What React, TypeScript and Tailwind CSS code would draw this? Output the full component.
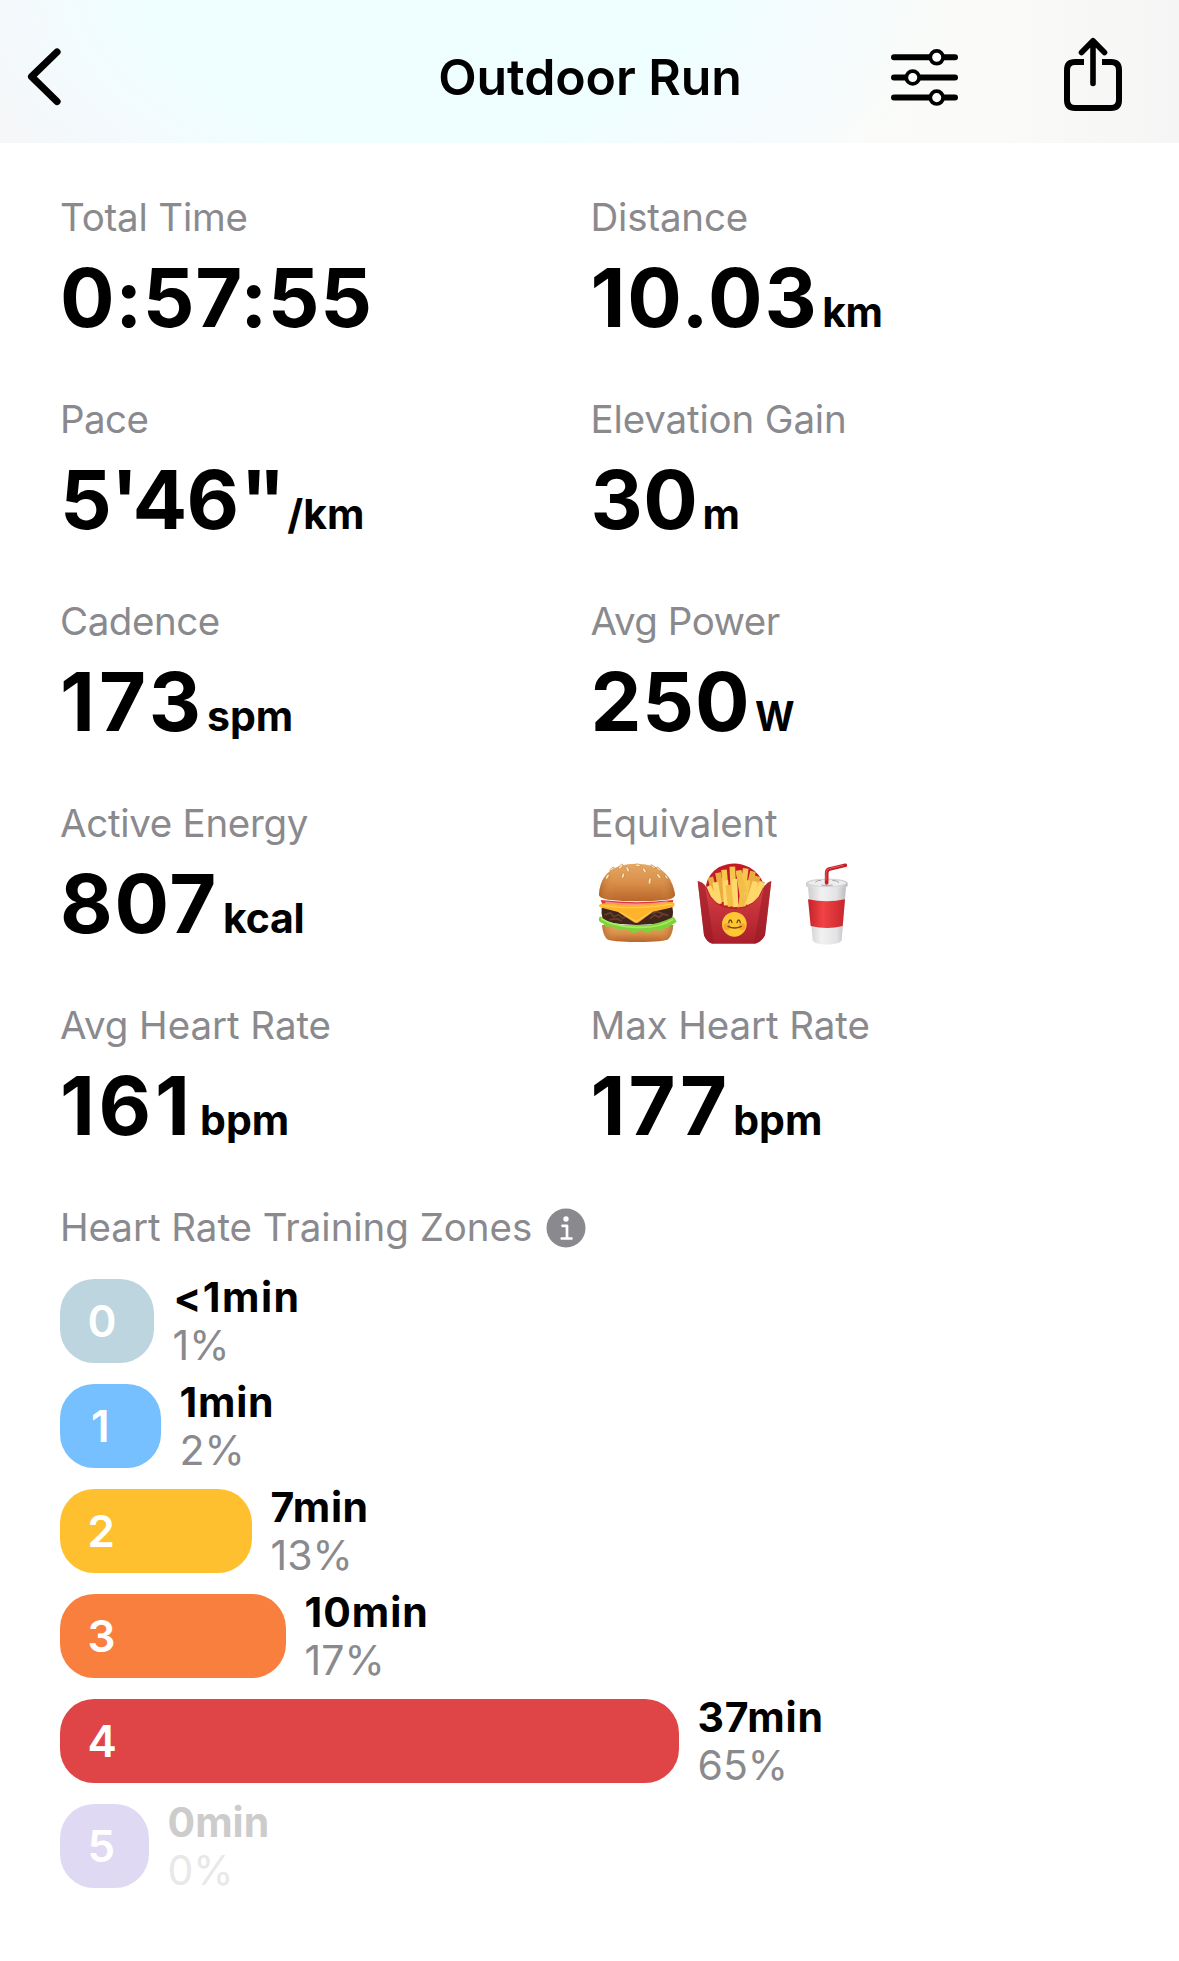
import React from 'react';

interface Metric {
  label: string;
  labelClass?: string;
  value?: React.ReactNode;
  valueClass?: string;
  unit?: string;
  unitClass?: string;
}

const pace = (
  <>
    5'46<span className="ml-[2px] tracking-[-9.5px]">''</span>
  </>
);

const metrics: Metric[] = [
  { label: 'Total Time', labelClass: 'tracking-[-0.2px]', value: '0:57:55', valueClass: 'tracking-[0.6px]' },
  { label: 'Distance', labelClass: 'tracking-[-0.2px]', value: '10.03', valueClass: 'tracking-[1.9px]', unit: 'km', unitClass: 'ml-[3.5px] tracking-[-0.5px]' },
  { label: 'Pace', labelClass: 'tracking-[-0.6px]', value: pace, valueClass: 'tracking-[-0.8px]', unit: '/km', unitClass: 'ml-[11px]' },
  { label: 'Elevation Gain', labelClass: 'tracking-[-0.15px]', value: '30', valueClass: 'tracking-[0.5px]', unit: 'm', unitClass: 'ml-[4px]' },
  { label: 'Cadence', labelClass: 'tracking-[-0.45px]', value: '173', valueClass: 'tracking-[4px]', unit: 'spm', unitClass: 'ml-[2px]' },
  { label: 'Avg Power', labelClass: 'tracking-[-0.5px]', value: '250', valueClass: 'tracking-[0.8px]', unit: 'W', unitClass: 'ml-[5px] inline-block origin-left scale-x-[0.93]' },
  { label: 'Active Energy', labelClass: 'tracking-[-0.3px]', value: '807', valueClass: 'tracking-[1.7px]', unit: 'kcal', unitClass: 'ml-[5px] tracking-[-0.2px]' },
  { label: 'Equivalent', labelClass: 'tracking-[-0.2px]' },
  { label: 'Avg Heart Rate', labelClass: 'tracking-[-0.05px]', value: '161', valueClass: 'tracking-[3.7px]', unit: 'bpm', unitClass: 'ml-[6.5px]' },
  { label: 'Max Heart Rate', labelClass: 'tracking-[-0.1px]', value: '177', valueClass: 'tracking-[3px]', unit: 'bpm', unitClass: 'ml-[3px]' },
];

const zones = [
  { id: 0, width: 94, color: 'bg-[#bcd5df]', time: '<1min', percent: '1%', timeClass: 'pl-px tracking-[1.5px]' },
  { id: 1, width: 101, color: 'bg-[#76c0ff]', time: '1min', percent: '2%', timeClass: 'tracking-[0.8px]' },
  { id: 2, width: 192, color: 'bg-[#ffc02f]', time: '7min', percent: '13%', timeClass: 'tracking-[0.6px]' },
  { id: 3, width: 226, color: 'bg-[#f97f3f]', time: '10min', percent: '17%', timeClass: 'tracking-[1px]' },
  { id: 4, width: 619, color: 'bg-[#df4547]', time: '37min', percent: '65%', timeClass: 'tracking-[0.8px]' },
  { id: 5, width: 89, color: 'bg-[#dfd9f3]', time: '0min', percent: '0%', timeClass: '' },
];

function BackIcon() {
  return (
    <svg width="36" height="60" viewBox="0 0 36 60" fill="none" stroke="black" strokeWidth="7.2" strokeLinecap="round" strokeLinejoin="round">
      <path d="M30 5 4.600 29.700 30 54.500" />
    </svg>
  );
}

function SlidersIcon() {
  return (
    <svg width="68" height="60" viewBox="0 0 68 60" fill="none" stroke="black" strokeLinecap="round">
      <g strokeWidth="6">
        <path d="M3 10.300H40M52 10.300H64" />
        <path d="M3 30.500H16M28 30.500H64" />
        <path d="M3 50.600H40M52 50.600H64" />
      </g>
      <g strokeWidth="3.700">
        <circle cx="45.700" cy="10.300" r="6.400" fill="#fbfcfb" />
        <circle cx="21.700" cy="30.500" r="6.400" fill="#fbfcfb" />
        <circle cx="45.700" cy="50.600" r="6.400" fill="#fbfcfb" />
      </g>
    </svg>
  );
}

function ShareIcon() {
  return (
    <svg width="58" height="82" viewBox="0 0 58 82" fill="none" stroke="black" strokeWidth="6" strokeLinejoin="round">
      <path d="M20 26H11q-8 0-8 8v30q0 8 8 8h36q8 0 8-8V34q0-8-8-8h-9" />
      <path d="M29 6v41.500M17.500 16.500 29 4.800 40.500 16.500" strokeWidth="5.600" strokeLinecap="round" />
    </svg>
  );
}

function InfoIcon() {
  return (
    <svg width="40" height="40" viewBox="0 0 40 40">
      <circle cx="20" cy="20" r="19.500" fill="#8a8a8e" />
      <circle cx="20" cy="11" r="2.700" fill="white" />
      <path d="M16.500 17.800H21V30M15.700 30.500H25.500" fill="none" stroke="white" strokeWidth="2.700" strokeLinecap="round" strokeLinejoin="round" />
    </svg>
  );
}

function Burger() {
  return (
    <svg width="100" height="100" viewBox="0 0 300 300">
      <defs>
        <linearGradient id="bun" x1="0" y1="0" x2="0" y2="1">
          <stop offset="0" stopColor="#e4a863" />
          <stop offset="0.5" stopColor="#d98f4a" />
          <stop offset="1" stopColor="#b9662a" />
        </linearGradient>
        <linearGradient id="bunSide" x1="0" x2="1">
          <stop offset="0" stopColor="#a9591f" stopOpacity="0.6" />
          <stop offset="0.2" stopColor="#e09a55" stopOpacity="0" />
          <stop offset="0.8" stopColor="#e09a55" stopOpacity="0" />
          <stop offset="1" stopColor="#a9591f" stopOpacity="0.6" />
        </linearGradient>
      </defs>
      <path d="M33 210q3 30 15 42 10 9 92 9t92-9q12-12 15-42z" fill="url(#bun)" />
      <path d="M33 210q3 30 15 42 10 9 92 9t92-9q12-12 15-42z" fill="url(#bunSide)" />
      <path d="M32 158q-3 37 14 43 94 18 188-1 17-12 10-45z" fill="#40251b" />
      <path d="M42 179l17-6 9 12 14-6 13 11 16-9M178 190l13-10 12 7 14-10 13 4M58 194l20-3 13 6M183 176l14-6 16 5" fill="none" stroke="#774736" strokeWidth="5" strokeLinecap="round" opacity="0.75" />
      <path d="M28 184q-9 9-1 17 10 2 14 10 7 9 17 3 9-1 15 6 13 10 25 3 10-2 17 5 13 11 24 2 11-7 22 1 13 6 21-4 10-6 20 0 13 2 18-8 12 3 16-7 12-4 21-12-5-11-10-15-44 25-108 28-80 0-111-29z" fill="#7ed33a" />
      <path d="M31 191q33 23 103 26t112-24" fill="none" stroke="#b1f364" strokeWidth="5" opacity="0.8" />
      <path d="M29 135q108 13 218 0l-5 19H36z" fill="#d63c42" />
      <path d="M43 142q98 13 187-1" stroke="#fa8d8b" strokeWidth="5" fill="none" />
      <path d="M24 151q5-7 24-6 90 11 180-3 20-4 23 4 2 7-12 12l-53 12-43 32q-7 4-14 0l-48-31-46-12q-13-4-11-8z" fill="#ffb42c" />
      <path d="M29 151q106 16 217-4M89 172l47 28 46-31" stroke="#ffd15a" strokeWidth="3" fill="none" />
      <path d="M24 118q4-65 61-85 54-14 107 2 49 18 60 83 1 12-23 16-90 10-178 0-28-5-27-16z" fill="url(#bun)" />
      <path d="M24 118q4-65 61-85 54-14 107 2 49 18 60 83 1 12-23 16-90 10-178 0-28-5-27-16z" fill="url(#bunSide)" />
      <g fill="#ffe3b0" stroke="#b77435" strokeWidth="1.500">
        <ellipse cx="89" cy="35" rx="4" ry="9" transform="rotate(40 89 35)" />
        <ellipse cx="110" cy="43" rx="4" ry="9" transform="rotate(-25 110 43)" />
        <ellipse cx="63" cy="42" rx="3" ry="8" transform="rotate(50 63 42)" />
        <ellipse cx="49" cy="65" rx="4" ry="9" transform="rotate(30 49 65)" />
        <ellipse cx="96" cy="62" rx="4" ry="9" transform="rotate(20 96 62)" />
        <ellipse cx="140" cy="31" rx="8" ry="4" />
        <ellipse cx="160" cy="46" rx="4" ry="9" transform="rotate(-30 160 46)" />
        <ellipse cx="176" cy="78" rx="4" ry="10" transform="rotate(8 176 78)" />
        <ellipse cx="186" cy="35" rx="3" ry="8" transform="rotate(-50 186 35)" />
        <ellipse cx="203" cy="42" rx="3" ry="8" transform="rotate(-50 203 42)" />
        <ellipse cx="203" cy="63" rx="4" ry="9" transform="rotate(-40 203 63)" />
        <ellipse cx="226" cy="66" rx="3" ry="8" transform="rotate(-35 226 66)" />
      </g>
    </svg>
  );
}

function Fries() {
  return (
    <svg width="90" height="100" viewBox="300 0 270 300">
      <defs>
        <linearGradient id="box" x1="0" y1="0" x2="0" y2="1">
          <stop offset="0" stopColor="#dc4347" />
          <stop offset="1" stopColor="#a91f2b" />
        </linearGradient>
      </defs>
      <path d="M345 90q8-34 38-53 48-23 92 0 33 19 43 53l-20 75H365z" fill="#c31a25" />
      <g strokeWidth="17" fill="none">
        <path d="M358 67l20 75M381 53l15 88M500 64l-24 80M514 79l-26 67M486 49l-20 86" stroke="#e9ad3f" />
        <path d="M399 44l9 103M424 35l5 116M464 40l-13 112M443 46l14 93M470 76l-14 79" stroke="#f6c64e" />
        <path d="M351 94l24 47M373 82l11 65M403 76l4 75M430 72l4 84M493 80l-22 70M513 82l-28 64" stroke="#ffd76b" />
        <path d="M462 119l-17 46M412 90l7 65M443 52l15 60" stroke="#f3bd47" />
      </g>
      <path d="M320 79q14 0 28 19 17 60 82 61 66 0 89-62 10-16 22-18l-19 162q-12 21-29 25H363q-17-5-24-25z" fill="url(#box)" />
      <path d="M320 79q9 0 22 13l27 173q-22-4-30-24zM541 79q-9 0-22 14l-30 172q22-4 33-24z" fill="#9b1b26" opacity="0.6" />
      <path d="M345 97q19 62 85 64 66-2 89-64" fill="none" stroke="#b7232c" strokeWidth="3" />
      <circle cx="430" cy="208" r="37" fill="#ffc731" />
      <circle cx="408" cy="215" r="10" fill="#fb9630" opacity="0.75" />
      <circle cx="453" cy="215" r="10" fill="#fb9630" opacity="0.75" />
      <path d="M413 203q2-8 5-8t5 8M438 203q2-8 5-8t5 8M411 214q20 10 40 0" fill="none" stroke="#754511" strokeWidth="4" strokeLinecap="round" />
    </svg>
  );
}

function Soda() {
  return (
    <svg width="80" height="100" viewBox="0 0 240 300">
      <defs>
        <linearGradient id="cup" x1="0" x2="1">
          <stop offset="0" stopColor="#cdcdd0" />
          <stop offset="0.35" stopColor="#f1f1f2" />
          <stop offset="0.75" stopColor="#e3e3e5" />
          <stop offset="1" stopColor="#bcbcc0" />
        </linearGradient>
        <linearGradient id="sleeve" x1="0" x2="1">
          <stop offset="0" stopColor="#c22229" />
          <stop offset="0.4" stopColor="#f04446" />
          <stop offset="1" stopColor="#c9252c" />
        </linearGradient>
      </defs>
      <path d="M54 95h114l-13 161q-7 13-44 13t-43-13z" fill="url(#cup)" />
      <path d="M54 133q57 12 111 0l-7 80q-46 12-96 0z" fill="url(#sleeve)" />
      <path d="M48 84q5-12 63-14 57 2 62 14v10q-12 8-62 9-51-1-63-9z" fill="url(#cup)" />
      <ellipse cx="111" cy="84" rx="58" ry="11" fill="#ededee" stroke="#c9c9cc" strokeWidth="2" />
      <path d="M76 82q6-7 18-6M127 76q17 1 20 7M95 90q17 4 33 0" stroke="#aaaaae" strokeWidth="3" fill="none" />
      <path d="M110 84V54q0-11 12-13l44-10" fill="none" stroke="#c51f29" strokeWidth="11" strokeLinejoin="round" strokeLinecap="round" />
      <path d="M108 76V54q0-11 12-14l40-9" fill="none" stroke="#ee5558" strokeWidth="3" />
    </svg>
  );
}

function MetricCell({ metric }: { metric: Metric }) {
  return (
    <div className="h-[202px] even:pl-px">
      <div className={`text-[38.5px] leading-[56px] text-[#8a8a8e] ${metric.labelClass ?? ''}`}>{metric.label}</div>
      {metric.value ? (
        <div className="flex items-baseline pt-px leading-[104px]">
          <span className={`text-[81px] font-bold ${metric.valueClass}`}>{metric.value}</span>
          {metric.unit && <span className={`text-[41px] font-bold ${metric.unitClass}`}>{metric.unit}</span>}
        </div>
      ) : (
        <div className="flex pt-1">
          <Burger />
          <Fries />
          <div className="pl-[9px]">
            <Soda />
          </div>
        </div>
      )}
    </div>
  );
}

export default function App() {
  return (
    <div className="h-[1961px] w-[1179px] overflow-hidden bg-white font-['Inter',sans-serif] text-black">
      <header className="grid h-[143px] grid-cols-[1fr_auto_1fr] items-center bg-[radial-gradient(750px_430px_at_430px_-20px,#efffff_36%,#f2fcffcc_50%,#f7fbfd00_70%),linear-gradient(to_right,#f6f6f7_0%,#f5f8fb_30%,#f9fafc_62%,#fbfbfa_72%,#fafbf8_85%,#f5f5f5_100%)] pt-[11px]">
        <div className="pl-[27px]">
          <BackIcon />
        </div>
        <h1 className="pl-px text-[50px] font-semibold tracking-[-0.1px]">Outdoor Run</h1>
        <div className="flex items-center justify-end gap-[105px] pr-[57px]">
          <SlidersIcon />
          <ShareIcon />
        </div>
      </header>

      <main className="px-[60px] pt-[46px]">
        <div className="grid grid-cols-2">
          {metrics.map((m) => (
            <MetricCell key={m.label} metric={m} />
          ))}
        </div>

        <div className="flex items-center gap-[13.5px] text-[38.5px] leading-[56px] text-[#8a8a8e]">
          <h2 className="tracking-[-0.05px]">Heart Rate Training Zones</h2>
          <div className="pt-px">
            <InfoIcon />
          </div>
        </div>

        <div className="mt-[24px] flex flex-col gap-[21px]">
          {zones.map((z) => (
            <div key={z.id} className="flex h-[84px] gap-[18.5px]">
              <div
                className={`flex items-center rounded-[34px] text-[44px] font-semibold text-white ${z.id === 1 ? 'pl-[31px]' : 'pl-[27.5px]'} ${z.color}`}
                style={{ width: z.width }}
              >
                {z.id}
              </div>
              <div className="-mt-[6px] text-[41px] leading-[48px]">
                <div className={`font-bold ${z.timeClass} ${z.id === 5 ? 'text-[#cccccc]' : ''}`}>{z.time}</div>
                <div className={z.id === 5 ? 'text-[#e8e8e8]' : 'text-[#8a8a8e]'}>{z.percent}</div>
              </div>
            </div>
          ))}
        </div>
      </main>
    </div>
  );
}
